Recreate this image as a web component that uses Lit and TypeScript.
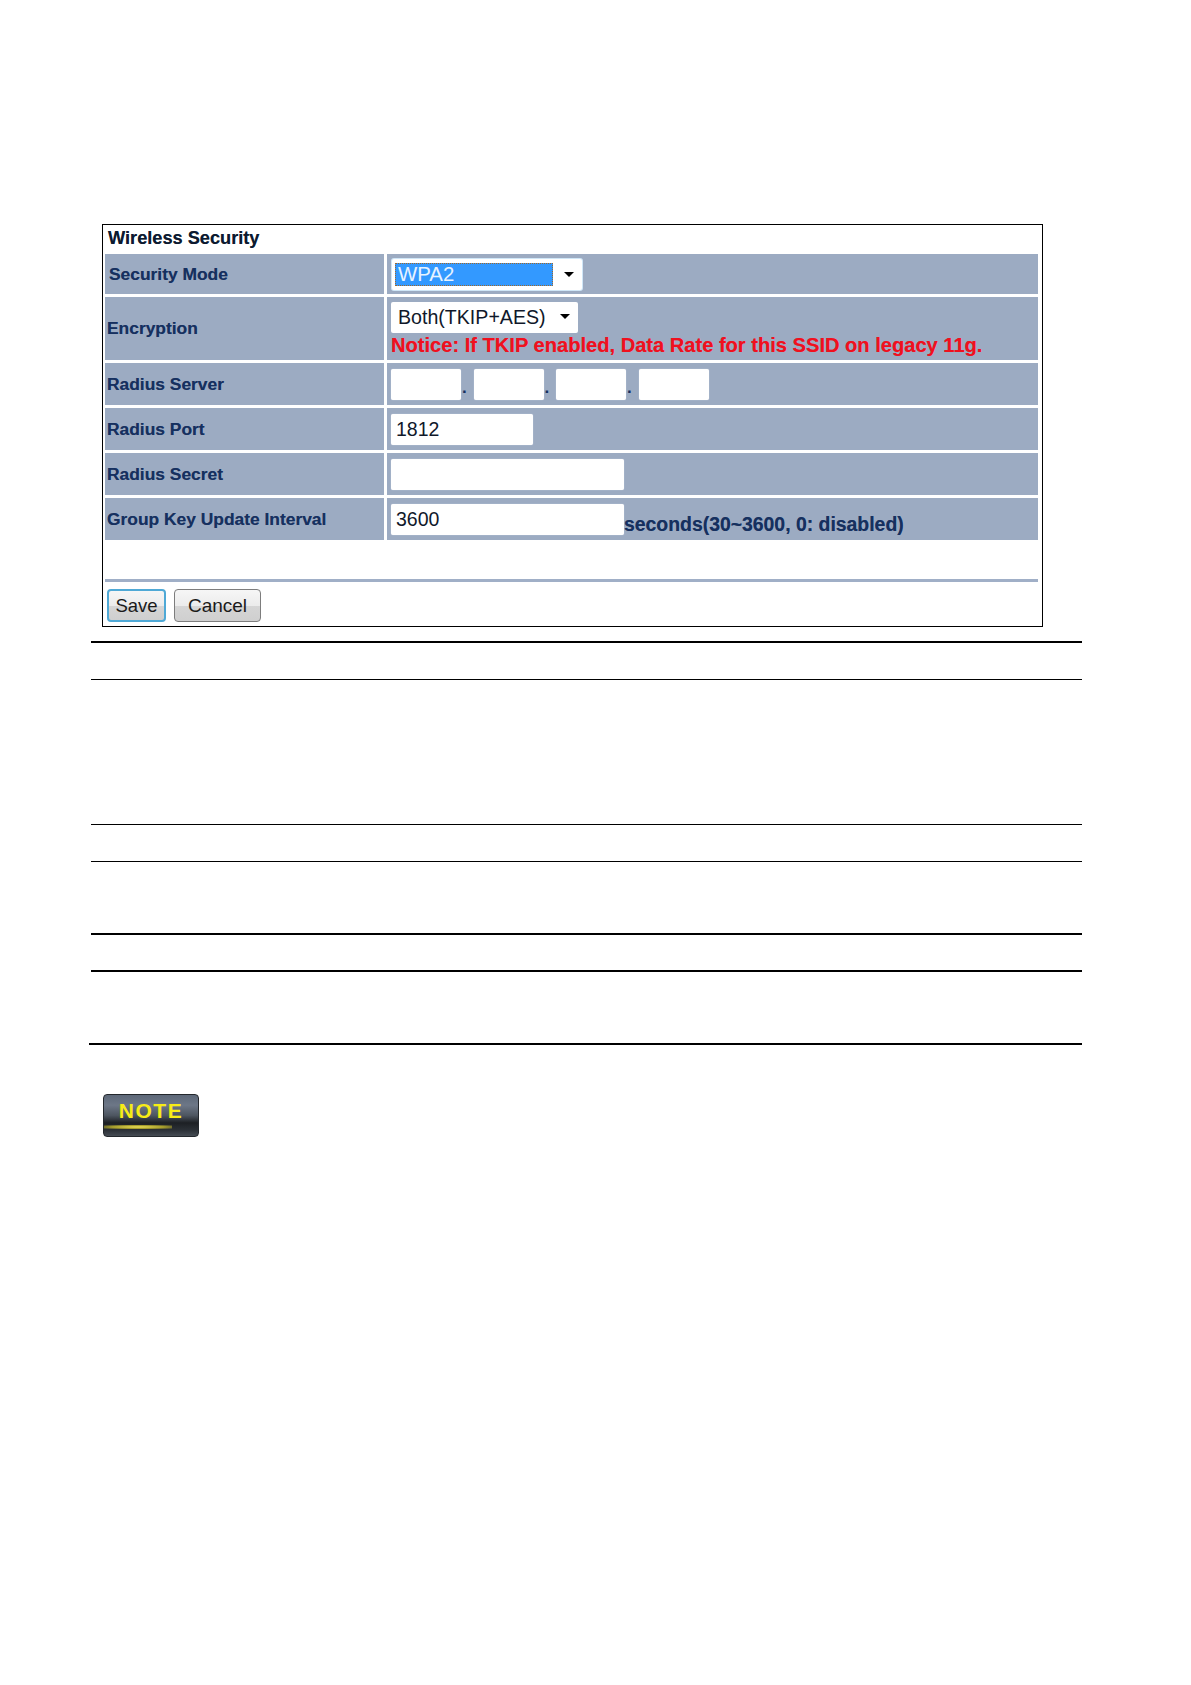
import { LitElement, html, css } from "lit";
import { customElement } from "lit/decorators.js";

const arrow = html`<svg class="arrow" width="10" height="5" viewBox="0 0 10 5"><path d="M0 0H10L5 5Z" fill="#000"/></svg>`;

@customElement("app-root")
export class AppRoot extends LitElement {
  static styles = css`
    :host { display: block; min-height: 1685px; background: #fff; font-family: "Liberation Sans", Arial, sans-serif; }
    .page { padding: 224px 0 0 91px; width: 991px; box-sizing: content-box; }
    .card { margin-left: 11px; width: 941px; height: 403px; box-sizing: border-box; border: 1px solid #000; padding: 0 4px 0 2px; display: flex; flex-direction: column; background: #fff; }
    .title { height: 29px; font-size: 18.2px; font-weight: 700; color: #0c1a30; padding: 3px 0 0 3px; box-sizing: border-box; line-height: 20px; text-shadow: 0 0 .6px rgba(12,26,48,.6); }
    .grid { display: grid; grid-template-columns: 279px 651px; grid-template-rows: 40px 63px 42px 42px 42px 42px; gap: 3px; }
    .label { background: #9cabc2; color: #16305f; font-size: 17.4px; font-weight: 700; display: flex; align-items: center; padding-left: 2px; box-sizing: border-box; text-shadow: 0 0 .6px rgba(22,48,95,.6); }
    .label.first { padding-left: 4px; }
    .value { background: #9cabc2; color: #16305f; font-size: 17px; font-weight: 700; padding-left: 4px; box-sizing: border-box; display: flex; align-items: center; }
    .value.stack { flex-direction: column; align-items: flex-start; justify-content: flex-start; padding-top: 5px; }
    .select { height: 31px; background: #fff; border-radius: 2px; box-sizing: border-box; display: flex; align-items: center; font-weight: 400; font-size: 19.6px; color: #10182a; position: relative; }
    .select.mode { width: 190px; margin-left: 1px; box-shadow: 0 0 0 1px #cfe6f7; padding-left: 3px; font-size: 20.4px; }
    .select.enc { width: 187px; padding-left: 7px; }
    .sel-text { display: block; width: 158px; height: 23px; line-height: 23px; background: #3399ff; color: #e8f3ff; padding-left: 3px; box-sizing: border-box; outline: 1px dotted #a0682a; outline-offset: -1px; }
    .arrow { position: absolute; right: 8px; top: 12px; }
    .select.mode .arrow { top: 13px; }
    .notice { color: #f0101e; font-size: 20.1px; line-height: 20px; margin-top: 2px; white-space: nowrap; text-shadow: 0 0 .5px rgba(240,16,30,.5); }
    .input { height: 31px; width: 70px; background: #fff; border-radius: 2px; box-sizing: border-box; box-shadow: 0 0 1px #dfe6ef; font-size: 19.5px; font-weight: 400; color: #10182a; padding-left: 5px; line-height: 31px; flex: none; }
    .input.port { width: 142px; }
    .input.wide { width: 233px; }
    .dot { width: 12.5px; padding-left: 1px; box-sizing: border-box; text-align: left; align-self: flex-end; line-height: 20px; padding-bottom: 7px; flex: none; }
    .unit { align-self: flex-end; line-height: 22px; padding-bottom: 5px; white-space: nowrap; font-size: 19.4px; text-shadow: 0 0 .6px rgba(22,48,95,.6); }
    .spacer { height: 39px; }
    .divider { height: 3px; background: #a0afc7; width: 933px; }
    .actions { display: flex; gap: 8px; padding: 7px 0 0 2px; }
    .btn { height: 33px; box-sizing: border-box; border: 1px solid #7d7d7d; border-radius: 4px; background: linear-gradient(#f6f6f6 0%, #ececec 50%, #d6d6d6 51%, #cfcfcf 100%); font: 400 19px "Liberation Sans", Arial, sans-serif; color: #1a1a1a; padding: 0; display: flex; align-items: center; justify-content: center; }
    .btn.save { width: 59px; border: 2px solid #4fa9d6; font-size: 18.5px; }
    .btn.cancel { width: 87px; }
    .rules { display: flex; flex-direction: column; margin-top: 14px; }
    .rule { border-top: 1px solid #000; box-sizing: border-box; }
    .rule.heavy { border-top-width: 2px; }
    .rule.last { margin-left: -2px; }
    .note { margin: 49px 0 0 12px; width: 96px; height: 43px; box-sizing: border-box; border: 1px solid #23272c; border-radius: 4px; background: linear-gradient(#5d6878 0%, #6d7787 25%, #4d5560 50%, #1d2024 68%, #2b3036 85%, #454b53 100%); position: relative; overflow: hidden; text-align: center; color: #f7ec16; font-size: 21px; font-weight: 700; letter-spacing: 1.5px; line-height: 32px; }
    .note::after { content: ""; position: absolute; left: 0; top: 30px; width: 72%; height: 4px; background: radial-gradient(ellipse at center, #f0e45a 0%, #a59c2c 55%, transparent 100%); }
  `;

  render() {
    return html`<div class="page">
      <section class="card">
        <div class="title">Wireless Security</div>
        <div class="grid">
          <div class="label first">Security Mode</div>
          <div class="value"><div class="select mode"><span class="sel-text">WPA2</span>${arrow}</div></div>
          <div class="label">Encryption</div>
          <div class="value stack">
            <div class="select enc">Both(TKIP+AES)${arrow}</div>
            <div class="notice">Notice: If TKIP enabled, Data Rate for this SSID on legacy 11g.</div>
          </div>
          <div class="label">Radius Server</div>
          <div class="value">
            <div class="input"></div><span class="dot">.</span>
            <div class="input"></div><span class="dot">.</span>
            <div class="input"></div><span class="dot">.</span>
            <div class="input"></div>
          </div>
          <div class="label">Radius Port</div>
          <div class="value"><div class="input port">1812</div></div>
          <div class="label">Radius Secret</div>
          <div class="value"><div class="input wide"></div></div>
          <div class="label">Group Key Update Interval</div>
          <div class="value"><div class="input wide">3600</div><span class="unit">seconds(30~3600, 0: disabled)</span></div>
        </div>
        <div class="spacer"></div>
        <div class="divider"></div>
        <div class="actions">
          <button class="btn save">Save</button>
          <button class="btn cancel">Cancel</button>
        </div>
      </section>
      <div class="rules">
        <div class="rule heavy" style="height:38px"></div>
        <div class="rule" style="height:145px"></div>
        <div class="rule" style="height:37px"></div>
        <div class="rule" style="height:72px"></div>
        <div class="rule heavy" style="height:37px"></div>
        <div class="rule heavy" style="height:73px"></div>
        <div class="rule heavy last"></div>
      </div>
      <div class="note">NOTE</div>
    </div>`;
  }
}
